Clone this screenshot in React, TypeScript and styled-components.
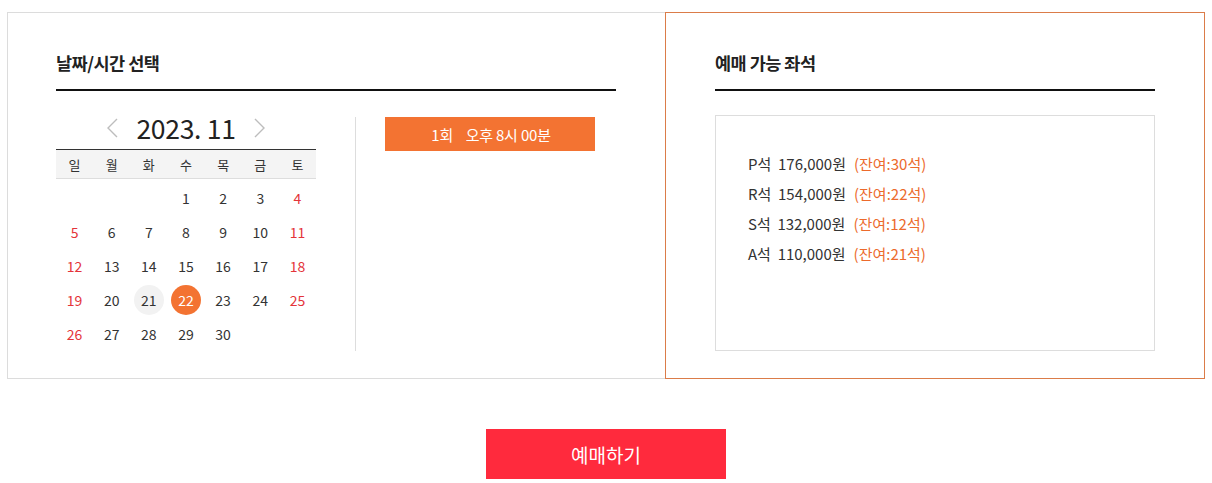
import React from 'react';
import styled, { createGlobalStyle } from 'styled-components';

const GlobalStyle = createGlobalStyle`
  body {
    margin: 0;
    background: #fff;
    font-family: 'Noto Sans CJK KR', 'Noto Sans', sans-serif;
    color: #333;
  }
`;

const Page = styled.div`
  padding: 12px 7px 0;
  display: flex;
  flex-direction: column;
  align-items: center;
`;

const Panels = styled.div`
  display: flex;
  width: 100%;
  box-sizing: border-box;
`;

const Panel = styled.section<{ $active?: boolean; $width: number }>`
  box-sizing: border-box;
  width: ${(p) => p.$width}px;
  height: 367px;
  padding: 0 49px 0 ${(p) => (p.$active ? 49 : 48)}px;
  border: 1px solid ${(p) => (p.$active ? '#db7c49' : '#dcdcdc')};
  ${(p) => (p.$active ? '' : 'border-right: none;')}
`;

const Title = styled.h2`
  margin: 0;
  padding: 37px 0 13px;
  font-size: 17.5px;
  line-height: 26px;
  font-weight: 700;
  letter-spacing: -0.5px;
  color: #222;
  border-bottom: 2px solid #111;
`;

const DateTimeBody = styled.div`
  display: flex;
  margin-top: 26px;
`;

const Calendar = styled.div`
  width: 260px;
`;

const MonthNav = styled.div`
  height: 32px;
  display: flex;
  align-items: center;
  justify-content: center;
  gap: 18px;
`;

const MonthLabel = styled.span`
  font-size: 26.5px;
  line-height: 32px;
  margin-top: -10px;
  color: #222;
  letter-spacing: -0.3px;
`;

const Chevron = styled.svg`
  width: 11px;
  height: 20px;
  margin-top: -10px;
`;

const WeekHead = styled.div`
  display: grid;
  grid-template-columns: repeat(7, 1fr);
  height: 28px;
  border-top: 1px solid #333;
  border-bottom: 1px solid #ddd;
  background: #f4f4f4;
`;

const WeekDay = styled.span`
  display: flex;
  align-items: center;
  justify-content: center;
  font-size: 13px;
  color: #333;
`;

const Days = styled.div`
  display: grid;
  grid-template-columns: repeat(7, 1fr);
  grid-auto-rows: 34px;
  padding-top: 2px;
`;

const Day = styled.span<{ $red?: boolean; $state?: 'today' | 'selected' }>`
  display: flex;
  align-items: center;
  justify-content: center;
  font-size: 14px;
  color: ${(p) => (p.$state === 'selected' ? '#fff' : p.$red ? '#e4343a' : '#333')};
  & > span {
    width: 30px;
    height: 30px;
    border-radius: 50%;
    display: flex;
    align-items: center;
    justify-content: center;
    background: ${(p) =>
      p.$state === 'selected' ? '#f37332' : p.$state === 'today' ? '#f2f2f2' : 'transparent'};
  }
`;

const TimeCol = styled.div`
  margin-left: 39px;
  padding-left: 29px;
  border-left: 1px solid #ddd;
  height: 234px;
  flex: 1;
`;

const TimeButton = styled.button`
  width: 210px;
  height: 34px;
  border: none;
  background: #f37332;
  color: #fff;
  font-family: inherit;
  font-size: 15px;
  letter-spacing: -0.2px;
  white-space: pre;
  padding: 0 0 0 2px;
  cursor: pointer;
`;

const SeatBox = styled.div`
  margin-top: 24px;
  height: 236px;
  box-sizing: border-box;
  border: 1px solid #ddd;
  padding: 32px 32px;
`;

const SeatRow = styled.div`
  height: 30px;
  display: flex;
  align-items: center;
  font-size: 15px;
  color: #333;
  white-space: pre;
`;

const Remain = styled.span`
  color: #ec6a2c;
  margin-left: 8px;
`;

const ReserveButton = styled.button`
  margin-top: 50px;
  width: 240px;
  height: 50px;
  border: none;
  background: #ff2a3d;
  color: #fff;
  font-family: inherit;
  font-size: 19px;
  cursor: pointer;
`;

const weekDays = ['일', '월', '화', '수', '목', '금', '토'];

const seats = [
  { grade: 'P', price: '176,000', left: 30 },
  { grade: 'R', price: '154,000', left: 22 },
  { grade: 'S', price: '132,000', left: 12 },
  { grade: 'A', price: '110,000', left: 21 },
];

const ChevronIcon = ({ dir }: { dir: 'left' | 'right' }) => (
  <Chevron viewBox="0 0 11 20">
    <path
      d={dir === 'left' ? 'M10 1 L1 10 L10 19' : 'M1 1 L10 10 L1 19'}
      fill="none"
      stroke="#bdbdbd"
      strokeWidth="1.4"
    />
  </Chevron>
);

const App = () => {
  // Nov 2023 starts on Wednesday
  const cells: (number | null)[] = [null, null, null];
  for (let d = 1; d <= 30; d++) cells.push(d);

  return (
    <>
      <GlobalStyle />
      <Page>
        <Panels>
          <Panel $width={658}>
            <Title>날짜/시간 선택</Title>
            <DateTimeBody>
              <Calendar>
                <MonthNav>
                  <ChevronIcon dir="left" />
                  <MonthLabel>2023. 11</MonthLabel>
                  <ChevronIcon dir="right" />
                </MonthNav>
                <WeekHead>
                  {weekDays.map((w) => (
                    <WeekDay key={w}>{w}</WeekDay>
                  ))}
                </WeekHead>
                <Days>
                  {cells.map((d, i) => (
                    <Day
                      key={i}
                      $red={i % 7 === 0 || i % 7 === 6}
                      $state={d === 21 ? 'today' : d === 22 ? 'selected' : undefined}
                    >
                      {d && <span>{d}</span>}
                    </Day>
                  ))}
                </Days>
              </Calendar>
              <TimeCol>
                <TimeButton>{'1회    오후 8시 00분'}</TimeButton>
              </TimeCol>
            </DateTimeBody>
          </Panel>
          <Panel $width={540} $active>
            <Title>예매 가능 좌석</Title>
            <SeatBox>
              {seats.map((s) => (
                <SeatRow key={s.grade}>
                  {`${s.grade}석  ${s.price}원`}
                  <Remain>(잔여:{s.left}석)</Remain>
                </SeatRow>
              ))}
            </SeatBox>
          </Panel>
        </Panels>
        <ReserveButton>예매하기</ReserveButton>
      </Page>
    </>
  );
};

export default App;
